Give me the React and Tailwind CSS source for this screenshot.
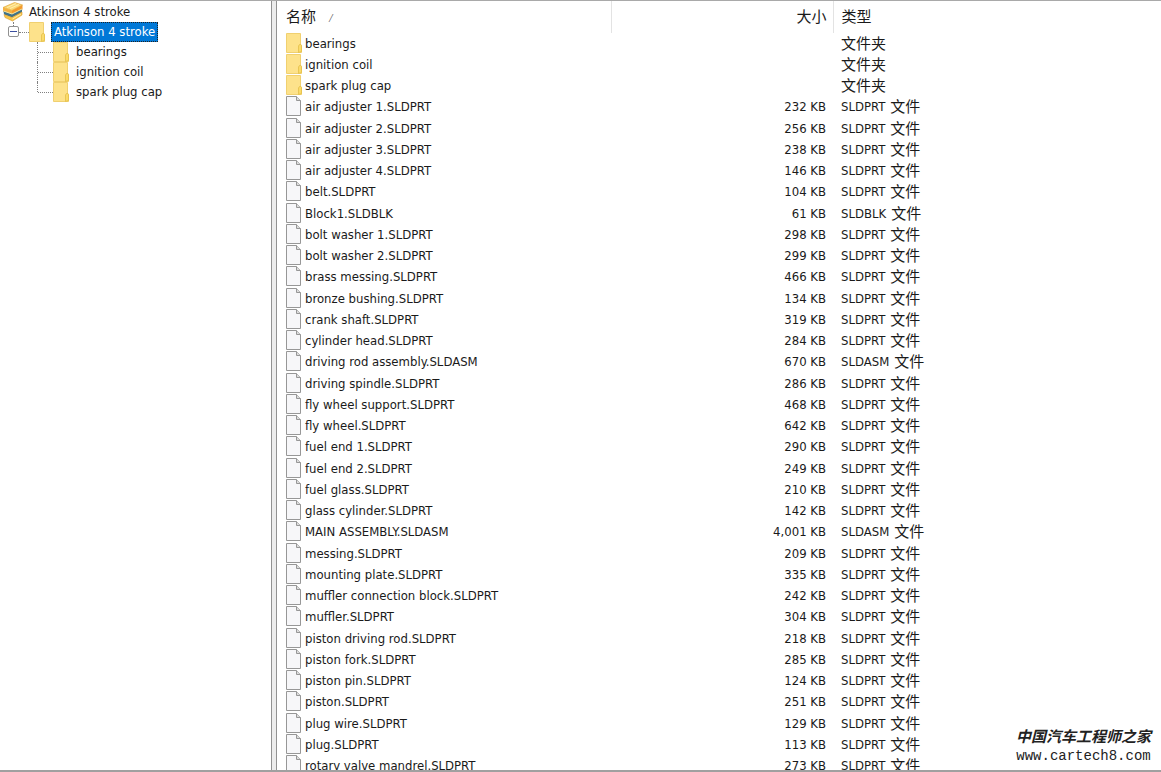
import React, { useState } from "react";

const folders = ["bearings", "ignition coil", "spark plug cap"];

const files = [
  ["air adjuster 1", "SLDPRT", "232"],
  ["air adjuster 2", "SLDPRT", "256"],
  ["air adjuster 3", "SLDPRT", "238"],
  ["air adjuster 4", "SLDPRT", "146"],
  ["belt", "SLDPRT", "104"],
  ["Block1", "SLDBLK", "61"],
  ["bolt washer 1", "SLDPRT", "298"],
  ["bolt washer 2", "SLDPRT", "299"],
  ["brass messing", "SLDPRT", "466"],
  ["bronze bushing", "SLDPRT", "134"],
  ["crank shaft", "SLDPRT", "319"],
  ["cylinder head", "SLDPRT", "284"],
  ["driving rod assembly", "SLDASM", "670"],
  ["driving spindle", "SLDPRT", "286"],
  ["fly wheel support", "SLDPRT", "468"],
  ["fly wheel", "SLDPRT", "642"],
  ["fuel end 1", "SLDPRT", "290"],
  ["fuel end 2", "SLDPRT", "249"],
  ["fuel glass", "SLDPRT", "210"],
  ["glass cylinder", "SLDPRT", "142"],
  ["MAIN ASSEMBLY", "SLDASM", "4,001"],
  ["messing", "SLDPRT", "209"],
  ["mounting plate", "SLDPRT", "335"],
  ["muffler connection block", "SLDPRT", "242"],
  ["muffler", "SLDPRT", "304"],
  ["piston driving rod", "SLDPRT", "218"],
  ["piston fork", "SLDPRT", "285"],
  ["piston pin", "SLDPRT", "124"],
  ["piston", "SLDPRT", "251"],
  ["plug wire", "SLDPRT", "129"],
  ["plug", "SLDPRT", "113"],
  ["rotary valve mandrel", "SLDPRT", "273"],
];

function ArchiveIcon() {
  return (
    <svg width="22" height="20" viewBox="0 0 22 20" className="shrink-0">
      <path d="M1 5.500 12.500.5l8 2.500L10 8.500z" fill="#fbd873" stroke="#dfa63a" strokeWidth=".7" />
      <path d="M5 5.500 14 1.500M8 6.500 17 2.500" stroke="#fff1bd" strokeWidth=".8" />
      <path d="M1 5.500l9 3v4l-9-3z" fill="#f5b13f" />
      <path d="M10 8.500 20.500 3v4.500L10 12.500z" fill="#f39a2c" />
      <path d="M1.500 9l8.500 3 10-5v3.500l-10 5-8-3z" fill="#3f7288" />
      <path d="M1.500 9l8.500 3 10-5" fill="none" stroke="#f3e7a2" strokeWidth="1" />
      <path d="M2 12.500l8 3 10-5.500v3L10.500 19 3 15.500z" fill="#f9c84a" stroke="#d99a2c" strokeWidth=".6" />
      <path d="M10.500 17 19 12" stroke="#fff3c4" strokeWidth=".8" />
    </svg>
  );
}

function FolderIcon() {
  return (
    <svg width="17" height="20" viewBox="0 0 17 20" className="block shrink-0">
      <path d="M.5.500h14v11l1 1v7H.500z" fill="#fde28b" stroke="#f0d070" />
      <path d="M12.500 19.500v-6.500l1-1.500h1.500l.5 1v6z" fill="#fbdb6a" stroke="#e3bf4a" strokeWidth=".8" />
    </svg>
  );
}

function FileIcon() {
  return (
    <svg width="17" height="20" viewBox="0 0 17 20" className="block shrink-0">
      <path d="M.500.500h10l4 4v15H.500z" fill="#f7f7f9" stroke="#979797" />
      <path d="M10.500.500v4h4" fill="#dcdcdc" stroke="#979797" />
    </svg>
  );
}

function Tree() {
  const [open, setOpen] = useState(true);

  return (
    <nav aria-label="Folders" className="pt-px pl-0.5 leading-5">
      <div className="flex h-5 items-center">
        <ArchiveIcon />
        <span className="pl-[5px]">Atkinson 4 stroke</span>
      </div>
      <div className="flex h-5 items-center pl-1.5">
        <div className="flex h-5 flex-col items-center">
          <span className="h-1 border-l border-dotted border-[#808080]" />
          <button
            type="button"
            aria-label="Toggle folder"
            aria-expanded={open}
            onClick={() => setOpen(!open)}
            className="flex size-[11px] items-center justify-center rounded-xs border border-[#919191] bg-white"
          >
            <span className="h-px w-[7px] bg-[#3c4fa0]" />
          </button>
        </div>
        <span className="w-2.5 border-t border-dotted border-[#808080]" />
        <FolderIcon />
        <button
          type="button"
          className="ml-[5px] h-5 border border-dotted border-[#222] bg-[#0078d7] px-0.5 leading-[18px] text-white"
        >
          Atkinson 4 stroke
        </button>
      </div>
      {open && (
        <ul className="pl-[35px]">
          {folders.map((folder) => (
            <li key={folder} className="group flex h-5">
              <span className="h-full border-l border-dotted border-[#808080] group-last:h-2.5" />
              <span className="mt-2.5 w-[15px] border-t border-dotted border-[#808080]" />
              <FolderIcon />
              <span className="pl-1.5">{folder}</span>
            </li>
          ))}
        </ul>
      )}
    </nav>
  );
}

function FileTable() {
  return (
    <table className="w-full table-fixed border-collapse text-left leading-[21px]">
      <colgroup>
        <col className="w-[334px]" />
        <col className="w-[222px]" />
        <col />
      </colgroup>
      <thead className="text-[15px]">
        <tr className="h-8">
          <th className="border-r border-[#e3e3e3] p-0 pt-px pl-[9px] font-normal">
            名称 <span className="pl-2.5 text-[10px] text-[#666]">⁄</span>
          </th>
          <th className="border-r border-[#e3e3e3] p-0 pt-px pr-1.5 text-right font-normal">
            大小
          </th>
          <th className="p-0 pt-px pl-2 font-normal">类型</th>
        </tr>
      </thead>
      <tbody>
        {folders.map((folder) => (
          <tr key={folder} className="h-[21px]">
            <td className="p-0 pl-[9px]">
              <div className="flex h-[21px] items-start gap-0.5">
                <FolderIcon />
                <span className="pt-px leading-5">{folder}</span>
              </div>
            </td>
            <td className="p-0" />
            <td className="p-0 pt-px pl-2 text-[15px] leading-5">文件夹</td>
          </tr>
        ))}
        {files.map(([name, ext, size]) => (
          <tr key={name} className="h-[21px] align-top nth-[4n]:h-[22px]">
            <td className="p-0 pl-[9px]">
              <div className="flex h-[21px] items-start gap-0.5">
                <FileIcon />
                <span className="pt-px leading-5">
                  {name}.{ext}
                </span>
              </div>
            </td>
            <td className="p-0 pt-px pr-[7px] text-right leading-5">{size} KB</td>
            <td className="p-0 pl-2">
              <div className="flex gap-[5px] pt-px leading-5">
                {ext} <span className="text-[15px]">文件</span>
              </div>
            </td>
          </tr>
        ))}
      </tbody>
    </table>
  );
}

function App() {
  return (
    <div className="relative flex h-screen border-t border-b-2 border-t-[#a9a9a9] border-b-[#a0a0a0] bg-white font-['DejaVu_Sans_Condensed','Noto_Sans_CJK_SC',sans-serif] text-[13px] whitespace-nowrap text-[#1a1a1a]">
      <aside className="w-[271px] shrink-0 overflow-hidden">
        <Tree />
      </aside>
      <div className="w-1.5 shrink-0 border-x border-[#919191] bg-[#ececec]" />
      <main className="min-w-0 flex-1 overflow-hidden">
        <FileTable />
      </main>
      <div className="absolute right-2.5 bottom-1 flex flex-col items-center text-[#222]">
        <span className="font-['Noto_Sans_CJK_SC',sans-serif] text-[15px] leading-5 font-bold italic">
          中国汽车工程师之家
        </span>
        <a
          href="http://www.cartech8.com"
          className="font-['Liberation_Mono',monospace] text-[14px] leading-5"
        >
          www.cartech8.com
        </a>
      </div>
    </div>
  );
}

export default App;
